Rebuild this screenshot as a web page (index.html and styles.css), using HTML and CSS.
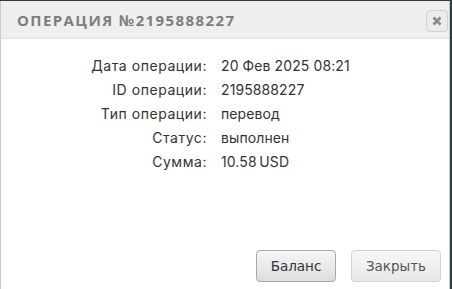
FILE: index.html
```html
<!DOCTYPE html>
<html lang="ru">
<head>
<meta charset="utf-8">
<link rel="stylesheet" href="styles.css">
</head>
<body>
<div class="dialog">
  <div class="header">
    <div class="title">Операция №2195888227</div>
    <button class="close" aria-label="Закрыть">
      <svg width="10" height="10" viewBox="0 0 10 10"><path d="M1.5 1.5L8.5 8.5M8.5 1.5L1.5 8.5" stroke="#8a8a8a" stroke-width="2.6" stroke-linecap="butt"/></svg>
    </button>
  </div>
  <div class="body">
    <div class="info">
      <div class="label">Дата операции:</div><div class="value">20 Фев 2025 08:21</div>
      <div class="label">ID операции:</div><div class="value">2195888227</div>
      <div class="label">Тип операции:</div><div class="value">перевод</div>
      <div class="label">Статус:</div><div class="value">выполнен</div>
      <div class="label">Сумма:</div><div class="value">10.58&#8201;USD</div>
    </div>
  </div>
  <div class="footer">
    <button class="btn primary">Баланс</button>
    <button class="btn secondary">Закрыть</button>
  </div>
</div>
</body>
</html>
```
FILE: styles.css
```css
html, body {
  margin: 0;
  padding: 0;
  background: #2e3b40;
  width: 452px;
  height: 289px;
  overflow: hidden;
}
.dialog {
  margin-top: 1px;
  width: 448px;
  height: 290px;
  background: #fff;
  border: 1px solid #c9c9c9;
  border-top: none;
  display: flex;
  flex-direction: column;
}
.header {
  height: 37px;
  background: #efefef;
  border-bottom: 1px solid #e0e0e0;
  display: flex;
  align-items: center;
  justify-content: space-between;
  padding: 0 1px 0 16px;
}
.title {
  font-family: "Open Sans", "DejaVu Sans", sans-serif;
  font-weight: 700;
  font-size: 15px;
  letter-spacing: 1.4px;
  text-transform: uppercase;
  color: #7d7d7d;
  margin-top: 1px;
}
.close {
  width: 22px;
  height: 22px;
  padding: 0;
  border: 1px solid #d2d2d2;
  border-radius: 4px;
  background: #ececec;
  display: flex;
  align-items: center;
  justify-content: center;
  margin-top: 2px;
}
.body {
  flex: 1;
  padding-top: 15px;
}
.info {
  display: grid;
  grid-template-columns: 206px auto;
  column-gap: 14px;
  row-gap: 0;
  font-family: Inter, "Open Sans", sans-serif;
  font-size: 14px;
  letter-spacing: 0.1px;
  color: #333;
}
.label, .value {
  height: 24px;
  line-height: 24px;
}
.label {
  text-align: right;
  letter-spacing: 0.55px;
}
.footer {
  display: flex;
  justify-content: flex-end;
  gap: 15px;
  padding: 0 8px 9px 0;
}
.btn {
  height: 32px;
  font-family: "DejaVu Sans", sans-serif;
  font-size: 13.5px;
  border-radius: 4px;
  padding: 0;
}
.primary {
  width: 80px;
  color: #333;
  border: 1px solid #a8a8a8;
  background: linear-gradient(#f6f6f6, #dedede);
}
.secondary {
  width: 90px;
  color: #555;
  border: 1px solid #d2d2d2;
  background: linear-gradient(#f7f7f7, #e8e8e8);
}
```
